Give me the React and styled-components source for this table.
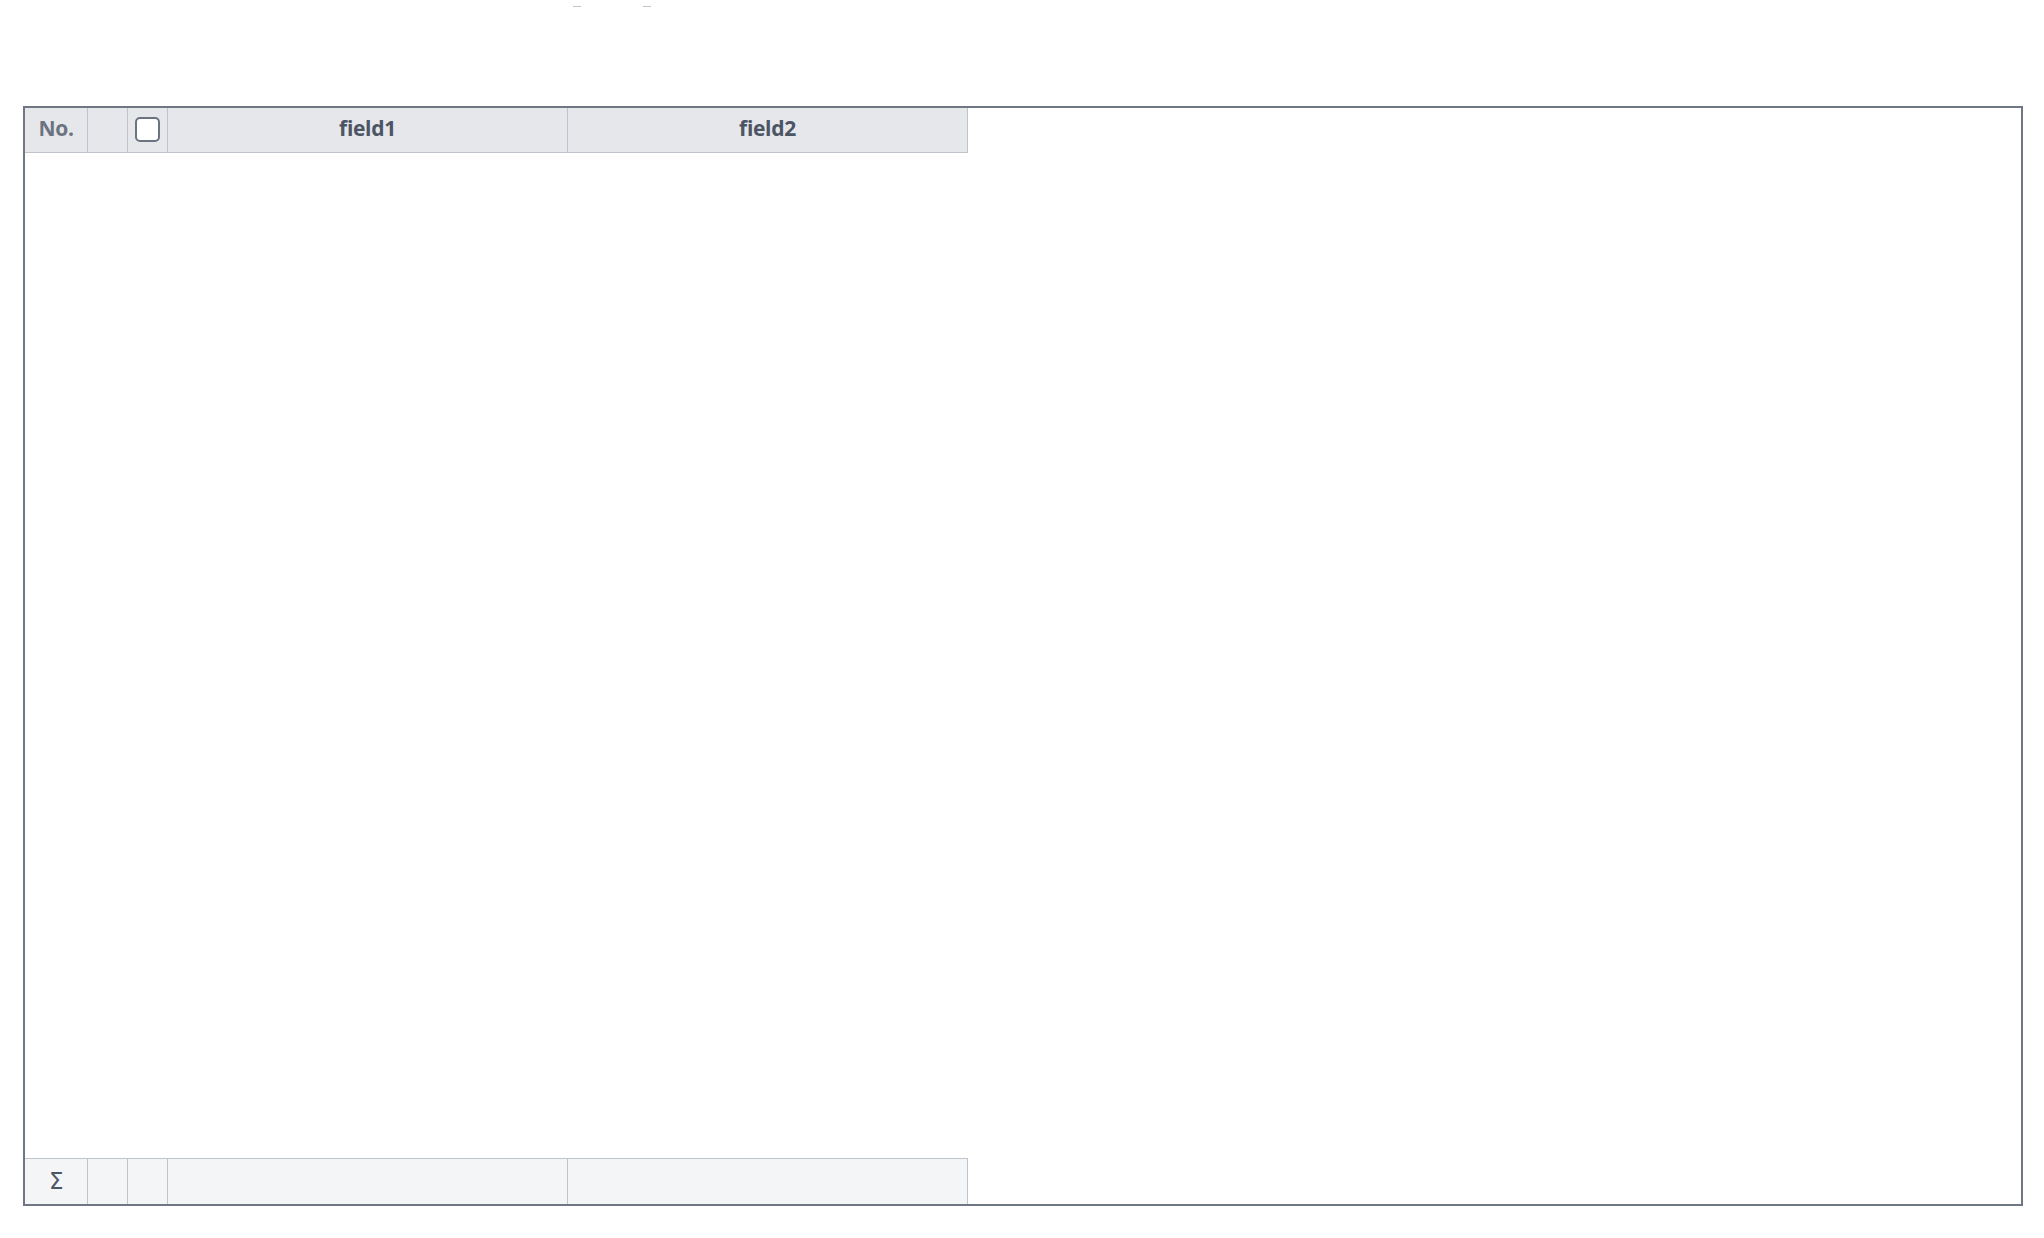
import React from "react";
import styled, { createGlobalStyle } from "styled-components";

const Global = createGlobalStyle`
  html, body { margin: 0; padding: 0; background: #ffffff; }
  body { font-family: "Open Sans", "Noto Sans", "Liberation Sans", sans-serif; }
  * { box-sizing: border-box; }
`;

const Page = styled.div`
  width: 2044px;
  height: 1238px;
  padding: 0 21px 0 23px;
  display: flex;
  flex-direction: column;
`;

const TopStrip = styled.div`
  height: 106px;
  position: relative;
`;

const Dash = styled.span`
  position: absolute;
  top: 6px;
  left: ${(p) => p.$x}px;
  width: 8px;
  height: 1px;
  background: #c4c4c4;
`;

const Frame = styled.div`
  width: 2000px;
  height: 1100px;
  border: 2px solid #707784;
  display: flex;
  flex-direction: column;
  background: #ffffff;
`;

const Row = styled.div`
  display: flex;
  align-self: flex-start;
  height: ${(p) => p.$h}px;
  background: ${(p) => p.$bg};
  border-top: ${(p) => (p.$top ? "1px solid #bfc3cb" : "none")};
  border-bottom: ${(p) => (p.$bottom ? "1px solid #bfc3cb" : "none")};
`;

const Cell = styled.div`
  width: ${(p) => p.$w}px;
  flex: none;
  height: 100%;
  border-right: 1px solid #bfc3cb;
  display: flex;
  align-items: center;
  justify-content: center;
  padding-bottom: ${(p) => (p.$foot ? 2 : 5)}px;
  font-size: 21px;
  font-weight: 700;
  color: ${(p) => (p.$muted ? "#6b7280" : "#4b5563")};
  letter-spacing: -0.3px;
`;

const Body = styled.div`
  flex: 1;
`;

const Check = styled.span`
  width: 25px;
  height: 25px;
  border: 2px solid #6b7280;
  border-radius: 5px;
  background: #ffffff;
  margin-top: 4px;
`;

const Sigma = styled.span`
  font-size: 23px;
  font-weight: 400;
  color: #4b5563;
  font-family: "DejaVu Sans", "Open Sans", sans-serif;
`;

const cols = [63, 40, 40, 400, 400];

export default function App() {
  return (
    <>
      <Global />
      <Page>
        <TopStrip>
          <Dash $x={550} />
          <Dash $x={620} />
        </TopStrip>
        <Frame>
          <Row $h={45} $bg="#e5e7eb" $bottom>
            <Cell $w={cols[0]} $muted>No.</Cell>
            <Cell $w={cols[1]} />
            <Cell $w={cols[2]}>
              <Check />
            </Cell>
            <Cell $w={cols[3]}>field1</Cell>
            <Cell $w={cols[4]}>field2</Cell>
          </Row>
          <Body />
          <Row $h={46} $bg="#f4f5f7" $top>
            <Cell $w={cols[0]} $foot>
              <Sigma>Σ</Sigma>
            </Cell>
            <Cell $w={cols[1]} $foot />
            <Cell $w={cols[2]} $foot />
            <Cell $w={cols[3]} $foot />
            <Cell $w={cols[4]} $foot />
          </Row>
        </Frame>
      </Page>
    </>
  );
}
